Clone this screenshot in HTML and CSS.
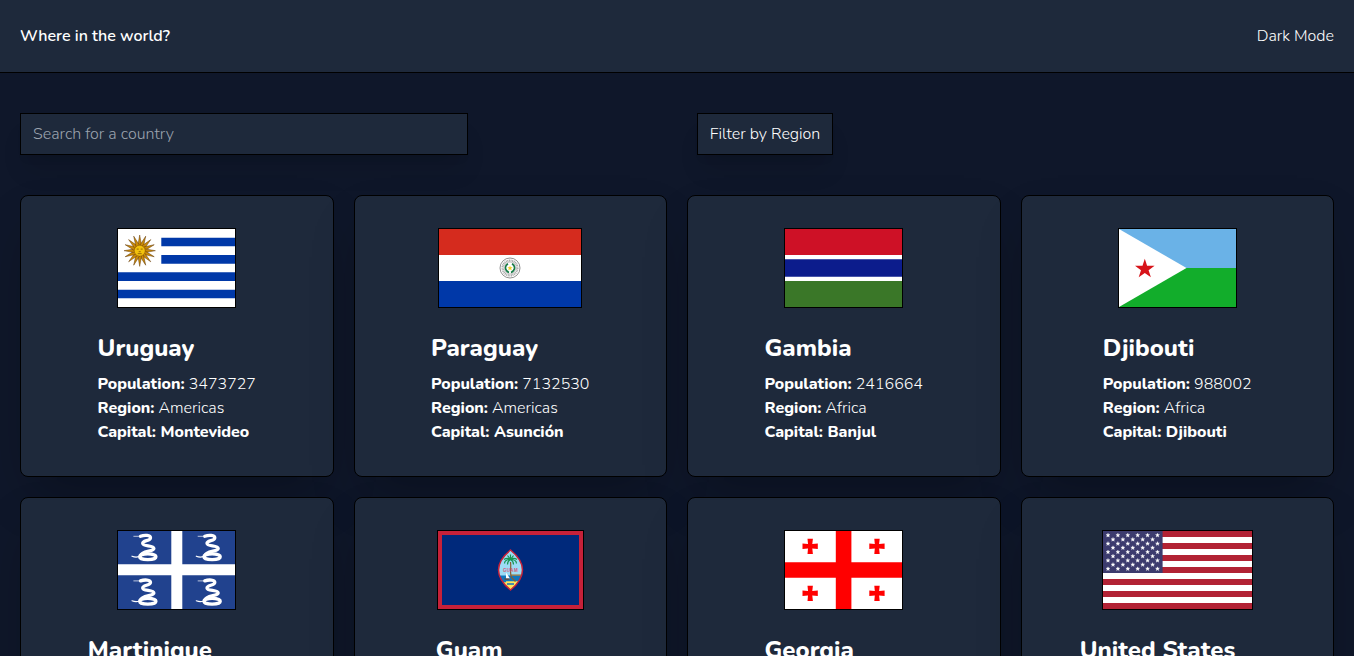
FILE: index.html
```html
<!DOCTYPE html>
<html lang="en">
<head>
<meta charset="utf-8">
<title>Where in the world?</title>
<link rel="stylesheet" href="styles.css">
</head>
<body>
<header class="header">
  <h1 class="brand">Where in the world?</h1>
  <button class="mode">Dark Mode</button>
</header>
<main class="main">
  <div class="controls">
    <input class="search" type="text" placeholder="Search for a country">
    <button class="filter">Filter by Region</button>
  </div>
  <section class="grid">
    <article class="card">
      <svg class="flag" width="117" height="78" viewBox="0 0 117 78">
        <rect width="117" height="78" fill="#fff"/>
        <path d="M43.3 8.67H117v8.67H43.3zM43.3 26H117v8.67H43.3zM0 43.33h117V52H0zM0 60.67h117v8.66H0z" fill="#0038a8"/>
        <g transform="translate(21.7 21.7)">
          <g fill="#c98a08" stroke="#5e3404" stroke-width=".45">
            <path id="ray" d="M-1.9-5 0-15.700 1.900-5z"/>
            <use href="#ray" transform="rotate(22.5)"/><use href="#ray" transform="rotate(45)"/><use href="#ray" transform="rotate(67.5)"/><use href="#ray" transform="rotate(90)"/><use href="#ray" transform="rotate(112.5)"/><use href="#ray" transform="rotate(135)"/><use href="#ray" transform="rotate(157.5)"/><use href="#ray" transform="rotate(180)"/><use href="#ray" transform="rotate(202.5)"/><use href="#ray" transform="rotate(225)"/><use href="#ray" transform="rotate(247.5)"/><use href="#ray" transform="rotate(270)"/><use href="#ray" transform="rotate(292.5)"/><use href="#ray" transform="rotate(315)"/><use href="#ray" transform="rotate(337.5)"/>
          </g>
          <circle r="5.4" fill="#f2c20c" stroke="#9a6507" stroke-width=".5"/>
          <path d="M-3-1.6h2M1-1.6h2M-1 1h2M-2 3h4" stroke="#7d5206" stroke-width=".8"/>
        </g>
      </svg>
      <div class="info"><h2 class="name">Uruguay</h2><p><b>Population:</b> 3473727</p><p><b>Region:</b> Americas</p><p class="capital">Capital: Montevideo</p></div>
    </article>
    <article class="card">
      <svg class="flag" width="142" height="78" viewBox="0 0 142 78">
        <rect width="142" height="78" fill="#fff"/><path d="M0 0h142v26H0z" fill="#d52b1e"/><path d="M0 52h142v26H0z" fill="#0038a8"/>
        <g fill="none" transform="translate(71 39)"><circle r="10" stroke="#777" stroke-width=".8"/><circle r="7.4" stroke="#aaa" stroke-width="2.3" stroke-dasharray="1 .6"/><circle r="5.8" stroke="#888" stroke-width=".4"/><path d="M-2-4.2C-6-2-5 3-1 4.4M2-4.2C6-2 5 3 1 4.4" stroke="#137a45" stroke-width="1.6"/><path d="m0-2.6.7 1.8h2L1.1.4l.7 2L0 1.2l-1.8 1.2.7-2-1.6-1.2h2z" fill="#f0cf24"/></g>
      </svg>
      <div class="info"><h2 class="name">Paraguay</h2><p><b>Population:</b> 7132530</p><p><b>Region:</b> Americas</p><p class="capital">Capital: Asunción</p></div>
    </article>
    <article class="card">
      <svg class="flag" width="117" height="78" viewBox="0 0 117 78">
        <rect width="117" height="78" fill="#fff"/><path d="M0 0h117v26H0z" fill="#ce1126"/><path d="M0 30.33h117v17.34H0z" fill="#0c1c8c"/><path d="M0 52h117v26H0z" fill="#3a7728"/>
      </svg>
      <div class="info"><h2 class="name">Gambia</h2><p><b>Population:</b> 2416664</p><p><b>Region:</b> Africa</p><p class="capital">Capital: Banjul</p></div>
    </article>
    <article class="card">
      <svg class="flag" width="117" height="78" viewBox="0 0 117 78">
        <path d="M0 0h117v39H0z" fill="#6ab2e7"/><path d="M0 39h117v39H0z" fill="#12ad2b"/><path d="m0 0 67.5 39L0 78z" fill="#fff"/><path d="m25.8 29.7 2.3 7.1h7.5l-6 4.4 2.3 7.1-6.1-4.4-6.1 4.4 2.3-7.1-6-4.4h7.5z" fill="#d7141a"/>
      </svg>
      <div class="info"><h2 class="name">Djibouti</h2><p><b>Population:</b> 988002</p><p><b>Region:</b> Africa</p><p class="capital">Capital: Djibouti</p></div>
    </article>
    <article class="card">
      <svg class="flag" width="117" height="78" viewBox="0 0 117 78">
        <rect width="117" height="78" fill="#21428e"/><path d="M53.3 0h11v33.3H117v11H64.3V78h-11V44.3H0v-11h53.3z" fill="#fff"/>
        <g id="snake" fill="none" stroke="#fff" stroke-linecap="round"><path d="M15.800 5.300h6" stroke-width=".7"/><path d="M22.500 5.300c4-1.500 10-1.200 10 1.400 0 3.500-8 2.500-7.800 5.800.2 3.300 11 1.400 11.200 5 .1 3-12.400 2.200-13.400 7" stroke-width="3.300"/><path d="M14 25.200c2 .8 5 1 7 .4" stroke-width="1.200"/><ellipse cx="29.800" cy="25.700" rx="8.200" ry="2.900" stroke-width="3.200"/></g>
        <use href="#snake" x="64.3"/><use href="#snake" y="44.6"/><use href="#snake" x="64.3" y="44.6"/>
      </svg>
      <div class="info"><h2 class="name">Martinique</h2><p><b>Population:</b> 378243</p><p><b>Region:</b> Americas</p><p class="capital">Capital: Fort-de-France</p></div>
    </article>
    <article class="card">
      <svg class="flag" width="145" height="78" viewBox="0 0 145 78">
        <rect width="145" height="78" fill="#c62139"/><path d="M4 4h137v70H4z" fill="#00297b"/>
        <clipPath id="seal"><path d="M72.5 19c16 13 16 27 0 40-16-13-16-27 0-40z"/></clipPath>
        <g clip-path="url(#seal)"><path d="M58 18h30v42H58z" fill="#9ddcf5"/><path d="M58 44.5h30V52H58z" fill="#1076bd"/><path d="M73 43.500h14v1.300H73z" fill="#9a7133"/><path d="M58 52c8-3 20-1 30-2v12H58z" fill="#ffe35b"/><path d="M62 50.5h6M69 53h7" stroke="#1076bd" stroke-width="1.5"/></g>
        <path d="M72.5 31c1 6-1 12 1 15.500l4 4" fill="none" stroke="#8b5a2d" stroke-width="1.2"/>
        <path d="M72.500 28.500c-3-2-5-1-6.500 0M72.500 28.500c-4 0-6 2-6 4M72.500 28.500c-2 1-3 3-3 5M72.500 28.500c3-2 5-1 6.500 0M72.500 28.500c4 0 6 2 6 4M72.500 28.500c2 1 3 3 3 5M72.500 29v-5.500M72.500 28.500l-3-4M72.500 28.500l3-4" fill="none" stroke="#179452" stroke-width="1.200"/>
        <text class="seal-text" x="72.5" y="40.5">GUAM</text>
        <path d="M68 41.500v6h4z" fill="#fff"/><path d="M66 47.5h6l-1 1.300h-4z" fill="#70452c"/>
        <path d="M72.5 19c16 13 16 27 0 40-16-13-16-27 0-40z" fill="none" stroke="#c62139" stroke-width="1.5"/>
      </svg>
      <div class="info"><h2 class="name">Guam</h2><p><b>Population:</b> 168783</p><p><b>Region:</b> Oceania</p><p class="capital">Capital: Hagåtña</p></div>
    </article>
    <article class="card">
      <svg class="flag" width="117" height="78" viewBox="0 0 117 78">
        <rect width="117" height="78" fill="#fff"/><path d="M50.8 0h15.6v31.200H117v15.600H66.400V78H50.800V46.800H0V31.200h50.800z" fill="#f00"/>
        <path id="cross" d="M22.500 7.800h5.400l-.6 5.200 5.500-.5v5.600l-5.500-.5.600 5.400h-5.400l.5-5.400-5.500.5v-5.600l5.500.5z" fill="#f00"/>
        <use href="#cross" x="66.8"/><use href="#cross" y="47"/><use href="#cross" x="66.8" y="47"/>
      </svg>
      <div class="info"><h2 class="name">Georgia</h2><p><b>Population:</b> 3714000</p><p><b>Region:</b> Asia</p><p class="capital">Capital: Tbilisi</p></div>
    </article>
    <article class="card">
      <svg class="flag" width="149" height="78" viewBox="0 0 149 78">
        <defs><path id="star" d="m0-2 .6 1.300H2L.9.300l.4 1.500L0 1l-1.300.8L-.9.300-2-.7h1.400z" fill="#fff" stroke="#fff" stroke-width=".3"/>
        <g id="row6"><use href="#star" x="5"/><use href="#star" x="14.9"/><use href="#star" x="24.8"/><use href="#star" x="34.7"/><use href="#star" x="44.6"/><use href="#star" x="54.5"/></g>
        <g id="row5"><use href="#star" x="10"/><use href="#star" x="19.9"/><use href="#star" x="29.8"/><use href="#star" x="39.7"/><use href="#star" x="49.6"/></g></defs>
        <rect width="149" height="78" fill="#fff"/><path d="M0 3h149M0 15h149M0 27h149M0 39h149M0 51h149M0 63h149M0 75h149" stroke="#b22234" stroke-width="6"/><path d="M0 0h59.6v42H0z" fill="#3c3b6e"/>
        <use href="#row6" y="4.2"/><use href="#row5" y="8.4"/><use href="#row6" y="12.6"/><use href="#row5" y="16.8"/><use href="#row6" y="21"/><use href="#row5" y="25.2"/><use href="#row6" y="29.4"/><use href="#row5" y="33.6"/><use href="#row6" y="37.8"/>
      </svg>
      <div class="info wide"><h2 class="name">United States</h2><p><b>Population:</b> 329484123</p><p><b>Region:</b> Americas</p><p class="capital">Capital: Washington, D.C.</p></div>
    </article>
  </section>
</main>
</body>
</html>
```
FILE: styles.css
```css
* { box-sizing: border-box; }
body, h1, h2, p { margin: 0; }
body {
  min-height: 100vh;
  background: #0f172a;
  color: #fff;
  font: 300 16px/24px Nunito, Lato, sans-serif;
}
button, input { font: inherit; color: inherit; }
.header {
  display: flex;
  justify-content: space-between;
  align-items: center;
  padding: 24px 20px;
  background: #1e293b;
  border-bottom: 1px solid #000;
}
.brand { font-size: 16px; line-height: 24px; font-weight: 600; }
.mode { padding: 0; border: 0; background: none; }
.main { padding: 40px 20px; }
.controls { display: grid; grid-template-columns: 1fr 1fr; gap: 40px; margin-bottom: 40px; }
.search, .filter {
  height: 42px;
  padding: 8px 12px;
  border: 1px solid #000;
  border-radius: 0;
  background: #1e293b;
  box-shadow: 0 20px 25px -5px rgba(0,0,0,.1), 0 8px 10px -6px rgba(0,0,0,.1);
}
.search { width: 448px; }
.search::placeholder { color: #9ca3af; opacity: 1; }
.filter { width: 136px; padding: 0; white-space: nowrap; }
.grid { display: grid; grid-template-columns: repeat(4, 1fr); gap: 20px; }
.card {
  display: flex;
  flex-direction: column;
  align-items: center;
  gap: 24px;
  padding: 32px 0;
  border: 1px solid #000;
  border-radius: 8px;
  background: #1e293b;
  box-shadow: 0 25px 50px -12px rgba(0,0,0,.25);
}
.flag { box-sizing: content-box; display: block; border: 1px solid #000; }
.info { white-space: nowrap; }
.wide { min-width: 195px; }
.name { margin-bottom: 8px; font-size: 24px; line-height: 32px; font-weight: 800; }
.info b, .capital { font-weight: 800; }
.seal-text { font: 700 4.5px "Liberation Sans", sans-serif; letter-spacing: .3px; fill: #d65a78; text-anchor: middle; }
```
